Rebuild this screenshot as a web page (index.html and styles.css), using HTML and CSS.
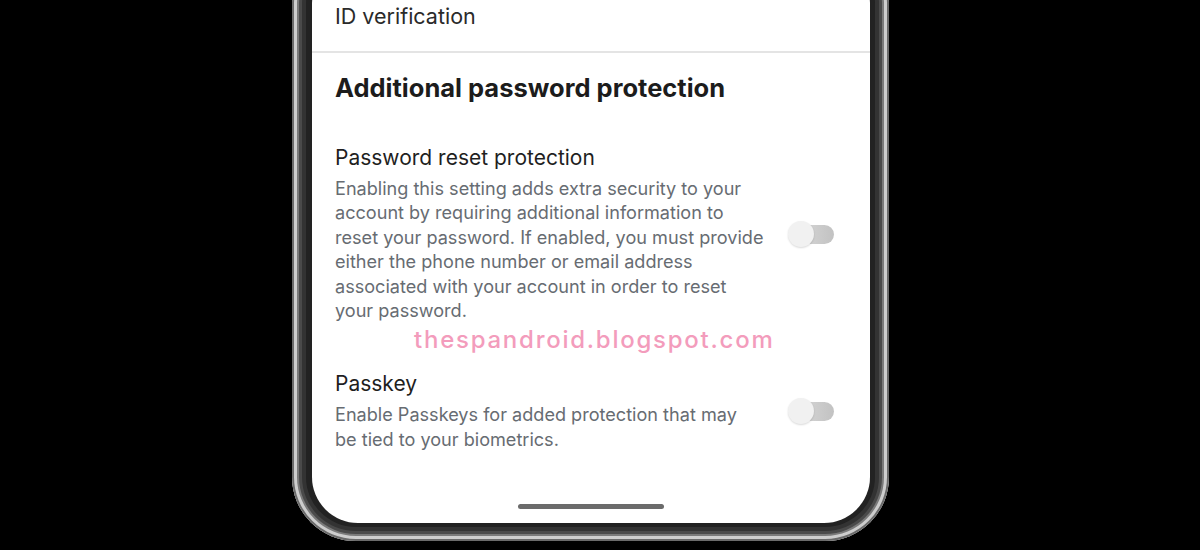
FILE: index.html
```html
<!DOCTYPE html>
<html lang="en">
<head>
<meta charset="utf-8">
<title>Additional password protection</title>
<link rel="stylesheet" href="styles.css">
</head>
<body>
<div class="phone">
  <div class="screen">
    <div class="row-plain">ID verification</div>
    <div class="divider"></div>
    <h2 class="section-title">Additional password protection</h2>

    <div class="setting setting-first">
      <div class="setting-text">
        <div class="setting-title">Password reset protection</div>
        <div class="setting-desc">Enabling this setting adds extra security to your account by requiring additional information to reset your password. If enabled, you must provide either the phone number or email address associated with your account in order to reset your password.</div>
      </div>
      <div class="toggle"><span class="track"></span><span class="thumb"></span></div>
    </div>

    <div class="setting setting-second">
      <div class="setting-text">
        <div class="setting-title">Passkey</div>
        <div class="setting-desc setting-desc-short">Enable Passkeys for added protection that may be tied to your biometrics.</div>
      </div>
      <div class="toggle"><span class="track"></span><span class="thumb"></span></div>
    </div>

    <div class="home-indicator"></div>
    <div class="watermark">thespandroid.blogspot.com</div>
  </div>
</div>
</body>
</html>
```

FILE: styles.css
```css
html, body {
  margin: 0;
  padding: 0;
  background: #000;
  height: 550px;
  overflow: hidden;
}

body {
  font-family: Inter, Roboto, "Noto Sans", "Liberation Sans", sans-serif;
}

.phone {
  box-sizing: border-box;
  width: 597px;
  margin: -60px 0 0 292px;
  padding: 20px 19px 18px 20px;
  border-radius: 64px;
  background: #222;
  box-shadow:
    inset 0 0 0 2px #6a6a6a,
    inset 0 0 0 5px #cdcdcd,
    inset 0 0 0 7px #7a7a7a,
    inset 0 0 0 10px #4a4a4a,
    inset 0 0 0 14px #333;
}

.screen {
  position: relative;
  background: #fff;
  border-radius: 44px 44px 46px 46px;
  display: flex;
  flex-direction: column;
  overflow: hidden;
}

.row-plain {
  padding: 42px 23px 0;
  font-size: 21.5px;
  line-height: 28px;
  color: #2a2a2a;
}

.divider {
  margin-top: 21px;
  height: 2px;
  background: #e4e4e4;
}

.section-title {
  margin: 0;
  padding: 19px 23px 0;
  font-size: 25.5px;
  line-height: 32px;
  font-weight: 700;
  color: #1c1c1c;
}

.setting {
  display: flex;
  align-items: center;
  padding: 0 36px 0 23px;
}

.setting-first { margin-top: 41px; }
.setting-second { margin-top: 49px; }

.setting-text {
  width: 430px;
}

.setting-title {
  font-size: 21px;
  line-height: 26px;
  color: #1f1f1f;
}

.setting-desc {
  margin-top: 5px;
  font-size: 18.1px;
  line-height: 24.4px;
  color: #676c72;
}

.setting-desc-short {
  max-width: 415px;
}

.toggle {
  position: relative;
  margin-left: auto;
  width: 46px;
  height: 28px;
}

.track {
  position: absolute;
  left: 3px;
  top: 5px;
  width: 43px;
  height: 19px;
  border-radius: 10px;
  background: linear-gradient(90deg, #dcdcdc, #c2c2c2);
}

.thumb {
  position: absolute;
  left: 0;
  top: 1px;
  width: 26px;
  height: 26px;
  border-radius: 50%;
  background: #f1f1f1;
  box-shadow: 0 1px 2px rgba(0, 0, 0, 0.15);
}

.home-indicator {
  align-self: center;
  width: 146px;
  height: 5px;
  border-radius: 3px;
  background: #6b6b6b;
  margin: 53px 0 14px 0;
}

.watermark {
  position: absolute;
  left: 102px;
  top: 365px;
  font-size: 24px;
  line-height: 30px;
  font-weight: 500;
  letter-spacing: 1.75px;
  color: #f39cbc;
}
```
